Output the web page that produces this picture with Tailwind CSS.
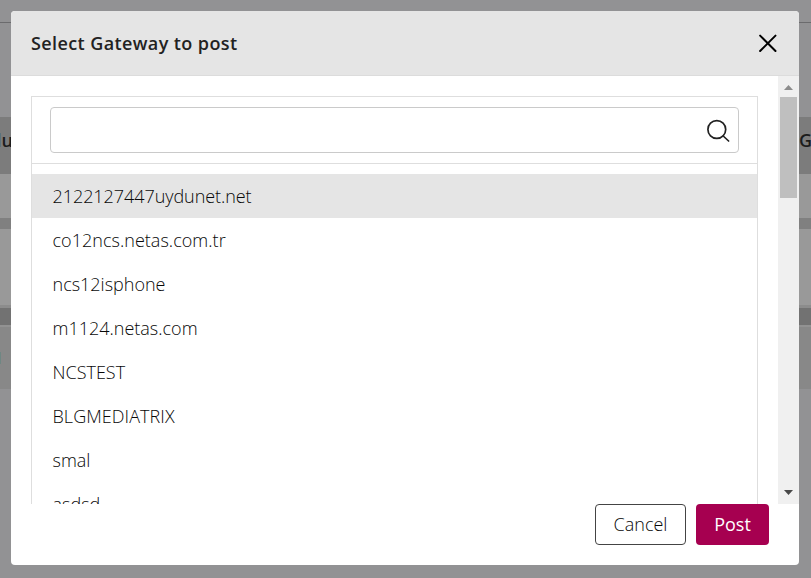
<!DOCTYPE html>
<html lang="en">
<head>
<meta charset="utf-8">
<title>Select Gateway to post</title>
<script src="https://cdn.jsdelivr.net/npm/@tailwindcss/browser@4"></script>
</head>
<body class="relative h-[578px] w-[811px] overflow-hidden bg-[#929294] font-['Open_Sans',sans-serif] text-[#222]">
  <!-- Dimmed page behind the dialog -->
  <div class="flex h-full flex-col text-[18px] font-semibold text-[#1c1c1c]">
    <div class="h-[23px] shrink-0 border-b border-[#6b6b6d]"></div>
    <div class="h-[94px] shrink-0"></div>
    <div class="flex h-[57px] shrink-0 items-center justify-between overflow-hidden bg-[#7c7c7c]">
      <span class="flex w-[13px] justify-end pb-[10px]">du</span><span class="w-[12px] pb-[10px]">G</span>
    </div>
    <div class="h-[44px] shrink-0 bg-[#999]"></div>
    <div class="h-[11px] shrink-0 bg-[#808080]"></div>
    <div class="h-[76px] shrink-0 bg-[#999]"></div>
    <div class="h-[3px] shrink-0 bg-[#8c8c8c]"></div>
    <div class="h-[17px] shrink-0 bg-[#727272]"></div>
    <div class="h-[2px] shrink-0 bg-[#929292]"></div>
    <div class="h-[62px] shrink-0 bg-[#888]">
      <div class="mt-[25px] h-[12px] w-px bg-[#6f8783]"></div>
    </div>
  </div>

  <!-- Dialog -->
  <div class="absolute top-[11px] left-[11px] flex h-[554px] w-[788px] flex-col overflow-hidden rounded bg-white">
    <header class="flex h-[65px] shrink-0 items-center justify-between border-b border-[#dcdcdc] bg-[#e5e5e5] pr-[22px] pl-5">
      <h1 class="text-[18px] leading-6 font-semibold tracking-[0.4px]">Select Gateway to post</h1>
      <svg class="size-[18px]" viewBox="0 0 18 18" fill="none" stroke="#000" stroke-width="2" stroke-linecap="round"><path d="M1.1 1.6 16.5 17M16.5 1.6 1.1 17"/></svg>
    </header>
    <div class="flex h-[428px] shrink-0 overflow-hidden">
      <div class="flex-1 pt-5 pr-5 pl-5">
        <div class="h-[600px] border border-[#dedede]">
          <div class="border-b border-[#dedede] px-[18px] pt-[10px] pb-[10px]">
            <div class="flex h-[46px] items-center justify-end rounded border border-[#cacaca] pr-[8px]">
              <svg class="mt-[2px] size-6" viewBox="0 0 24 24" fill="none" stroke="#222" stroke-width="1.7" stroke-linecap="round"><circle cx="10.8" cy="10.5" r="8.9"/><path d="m17.2 17 5.4 5"/></svg>
            </div>
          </div>
          <ul class="pt-[10px] text-[18px] leading-[44px] font-light text-[#080808]">
            <li class="h-11 bg-[#e5e5e5] pl-[20.5px] tracking-[-0.06px]">2122127447uydunet.net</li>
            <li class="h-11 pl-[20.5px] tracking-[0.03px]">co12ncs.netas.com.tr</li>
            <li class="h-11 pl-[20.5px]">ncs12isphone</li>
            <li class="h-11 pl-[20.5px]">m1124.netas.com</li>
            <li class="h-11 pl-[20.5px]">NCSTEST</li>
            <li class="h-11 pl-[20.5px] tracking-[0.06px]">BLGMEDIATRIX</li>
            <li class="h-11 pl-[20.5px]">smal</li>
            <li class="h-11 pl-[20.5px]">asdsd</li>
          </ul>
        </div>
      </div>
      <div class="flex w-[21px] flex-col items-center justify-between bg-[#f0f0f0]">
        <div class="flex flex-col items-center">
          <svg class="h-[21px] w-[17px]" viewBox="0 0 17 21" fill="#8c8c8c"><path d="M4 14 8.5 9 13 14z"/></svg>
          <div class="h-[101px] w-[17px] bg-[#bfbfbf]"></div>
        </div>
        <svg class="h-[21px] w-[17px]" viewBox="0 0 17 21" fill="#484848"><path d="M4 7 8.5 12 13 7z"/></svg>
      </div>
    </div>
    <footer class="flex justify-end gap-[10px] pr-[30px] text-[18px]">
      <button class="h-[41px] w-[91px] rounded border border-[#444] font-light text-[#080808]">Cancel</button>
      <button class="h-[41px] w-[73px] rounded bg-[#a60050] text-white">Post</button>
    </footer>
  </div>
</body>
</html>
